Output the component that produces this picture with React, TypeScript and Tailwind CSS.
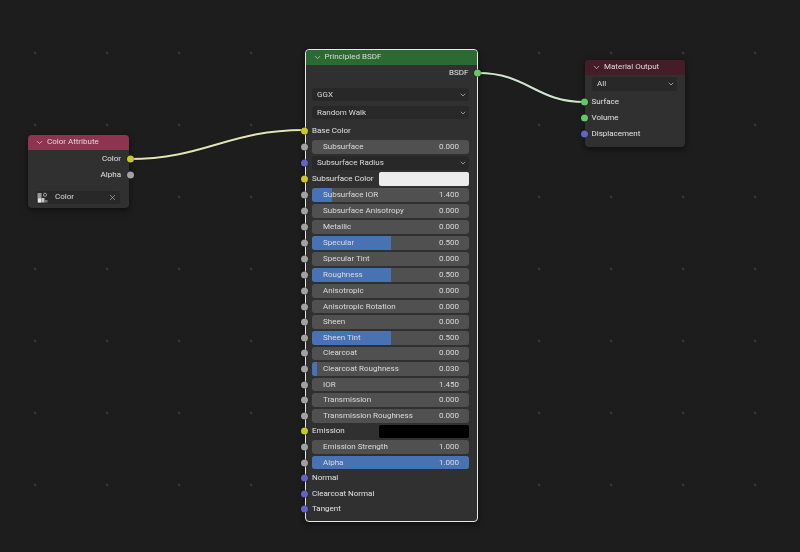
import React from 'react';
import { ChevronDown, X } from 'lucide-react';

type SocketColor = 'gray' | 'yellow' | 'blue' | 'green';

const SOCKET_CLASS: Record<SocketColor, string> = {
	gray: 'bg-[#a1a1a1]',
	yellow: 'bg-[#c7c729]',
	blue: 'bg-[#6363c7]',
	green: 'bg-[#63c763]',
};

function Socket({ color, side }: { color: SocketColor; side: 'left' | 'right' }) {
	const sideClass = side === 'left' ? 'left-[-4.5px]' : 'right-[-4.5px]';
	return (
		<span className={`absolute top-1/2 -translate-y-1/2 w-[7px] h-[7px] rounded-full shadow-[0_0_1px_#000] z-10 ${sideClass} ${SOCKET_CLASS[color]}`} />
	);
}

function Row({ socket, children }: { socket?: SocketColor; children: React.ReactNode }) {
	return (
		<div className="relative h-full flex items-center pl-[6.5px] pr-[7.5px]">
			{socket && <Socket color={socket} side="left" />}
			{children}
		</div>
	);
}

function Slider({ label, value, fill = 0, socket = 'gray' }: { label: string; value: string; fill?: number; socket?: SocketColor }) {
	return (
		<Row socket={socket}>
			<div className="relative flex-1 h-[13.5px] rounded-[3px] bg-[#505050] overflow-hidden flex items-center justify-between pl-[11px] pr-[10px] text-[#dcdcdc]">
				{fill > 0 && <span className="absolute left-0 top-0 bottom-0 bg-[#4772b3]" style={{ width: `${fill * 100}%` }} />}
				<span className="relative">{label}</span>
				<span className="relative">{value}</span>
			</div>
		</Row>
	);
}

function Dropdown({ label }: { label: string }) {
	return (
		<div className="flex-1 h-[13.5px] rounded-[3px] bg-[#282828] flex items-center justify-between pl-[5px] pr-[2px] text-[#dcdcdc]">
			<span>{label}</span>
			<ChevronDown size={8} strokeWidth={2} className="text-[#c8c8c8]" />
		</div>
	);
}

function ColorRow({ label, swatch }: { label: string; swatch: string }) {
	return (
		<Row socket="yellow">
			<span className="w-[67px] shrink-0 text-[#e2e2e2]">{label}</span>
			<span className={`flex-1 h-[13.5px] rounded-[2px] ${swatch}`} />
		</Row>
	);
}

function InputRow({ label, socket }: { label: string; socket: SocketColor }) {
	return (
		<Row socket={socket}>
			<span className="text-[#e2e2e2]">{label}</span>
		</Row>
	);
}

function NodeHeader({ title, color }: { title: string; color: string }) {
	return (
		<div className={`h-[15px] rounded-t-[4px] flex items-center pl-[7px] gap-[3px] text-[#dcdcdc] ${color}`}>
			<ChevronDown size={9} strokeWidth={2} className="text-[#d0d0d0]" />
			<span>{title}</span>
		</div>
	);
}

function Wires() {
	return (
		<svg className="absolute inset-0 z-0" width="800" height="552" fill="none">
			<path d="M129 159 C 205 159, 228 130, 304 130" stroke="#101010" strokeWidth="3.4" opacity="0.5" />
			<path d="M129 159 C 205 159, 228 130, 304 130" stroke="#e4e4b4" strokeWidth="2" />
			<path d="M478 73 C 528 73, 535 102, 585 102" stroke="#101010" strokeWidth="3.4" opacity="0.5" />
			<path d="M478 73 C 528 73, 535 102, 585 102" stroke="#cfe6cf" strokeWidth="2" />
		</svg>
	);
}

function ColorAttributeNode() {
	return (
		<div className="absolute left-[28px] top-[134.5px] w-[101px] h-[73px] z-10 rounded-[4px] bg-[#303030] shadow-[0_2px_6px_rgba(0,0,0,0.55)]">
			<NodeHeader title="Color Attribute" color="bg-[#8f3350]" />
			<div className="relative h-[19px] flex items-center justify-end pr-[8px] text-[#e2e2e2]">
				<span>Color</span>
				<Socket color="yellow" side="right" />
			</div>
			<div className="relative h-[13px] flex items-center justify-end pr-[8px] text-[#e2e2e2]">
				<span>Alpha</span>
				<Socket color="gray" side="right" />
			</div>
			<div className="ml-[8px] mr-[9px] mt-[9px] h-[13px] rounded-[3px] bg-[#282828] flex items-center pl-[1px] pr-[3px] text-[#dcdcdc]">
				<svg width="11" height="11" viewBox="0 0 11 11" className="mr-[7px]">
					<rect x="0.5" y="1" width="4" height="9.5" fill="#9a9a9a" />
					<rect x="1" y="6.5" width="3" height="4" fill="#e8e8e8" />
					<rect x="4.5" y="6" width="3" height="4.5" fill="#c8c8c8" />
					<rect x="7.5" y="8" width="3" height="2.5" fill="#777777" />
					<circle cx="8" cy="2.8" r="1.6" fill="none" stroke="#bdbdbd" strokeWidth="0.8" />
				</svg>
				<span className="flex-1">Color</span>
				<X size={9} strokeWidth={1.6} className="text-[#c0c0c0]" />
			</div>
		</div>
	);
}

function PrincipledNode() {
	return (
		<div className="absolute left-[304.5px] top-[48.5px] w-[173px] h-[473px] z-10 rounded-[4px] bg-[#303030] border border-[#e8e8e8] shadow-[0_2px_6px_rgba(0,0,0,0.55)]">
			<NodeHeader title="Principled BSDF" color="bg-[#2b6a30]" />
			<div className="relative h-[16px] mt-[0.5px] flex items-center justify-end pr-[8px] text-[#e2e2e2]">
				<span>BSDF</span>
				<Socket color="green" side="right" />
			</div>
			<div className="grid auto-rows-[18px] mt-[4.5px]">
				<Row><Dropdown label="GGX" /></Row>
				<Row><Dropdown label="Random Walk" /></Row>
			</div>
			<div className="grid auto-rows-[16px] mt-[1.3px]">
				<InputRow label="Base Color" socket="yellow" />
				<Slider label="Subsurface" value="0.000" />
				<Row socket="blue"><Dropdown label="Subsurface Radius" /></Row>
				<ColorRow label="Subsurface Color" swatch="bg-[#ececec]" />
				<Slider label="Subsurface IOR" value="1.400" fill={0.13} />
				<Slider label="Subsurface Anisotropy" value="0.000" />
				<Slider label="Metallic" value="0.000" />
				<Slider label="Specular" value="0.500" fill={0.5} />
				<Slider label="Specular Tint" value="0.000" />
				<Slider label="Roughness" value="0.500" fill={0.5} />
				<Slider label="Anisotropic" value="0.000" />
			</div>
			<div className="grid auto-rows-[15.6px]">
				<Slider label="Anisotropic Rotation" value="0.000" />
				<Slider label="Sheen" value="0.000" />
				<Slider label="Sheen Tint" value="0.500" fill={0.5} />
				<Slider label="Clearcoat" value="0.000" />
				<Slider label="Clearcoat Roughness" value="0.030" fill={0.03} />
				<Slider label="IOR" value="1.450" />
				<Slider label="Transmission" value="0.000" />
				<Slider label="Transmission Roughness" value="0.000" />
				<ColorRow label="Emission" swatch="bg-black" />
				<Slider label="Emission Strength" value="1.000" />
				<Slider label="Alpha" value="1.000" fill={1} />
				<InputRow label="Normal" socket="blue" />
				<InputRow label="Clearcoat Normal" socket="blue" />
				<InputRow label="Tangent" socket="blue" />
			</div>
		</div>
	);
}

function MaterialOutputNode() {
	return (
		<div className="absolute left-[585px] top-[59.5px] w-[100px] h-[87.5px] z-10 rounded-[4px] bg-[#303030] shadow-[0_2px_6px_rgba(0,0,0,0.55)]">
			<NodeHeader title="Material Output" color="bg-[#451d29]" />
			<div className="flex items-center h-[18px] mt-[0.5px] pl-[7px] pr-[8px]">
				<Dropdown label="All" />
			</div>
			<div className="grid auto-rows-[16.3px] mt-[0.5px]">
				<InputRow label="Surface" socket="green" />
				<InputRow label="Volume" socket="green" />
				<InputRow label="Displacement" socket="blue" />
			</div>
		</div>
	);
}

export default function App() {
	return (
		<div className="relative w-[800px] h-[552px] overflow-hidden bg-[#1d1d1d] bg-[radial-gradient(circle,#363636_1px,transparent_1.8px)] bg-[length:72px_72px] bg-[position:-1px_17px] font-['Roboto',sans-serif] text-[8px] leading-none blur-[0.3px]">
			<Wires />
			<ColorAttributeNode />
			<PrincipledNode />
			<MaterialOutputNode />
		</div>
	);
}
